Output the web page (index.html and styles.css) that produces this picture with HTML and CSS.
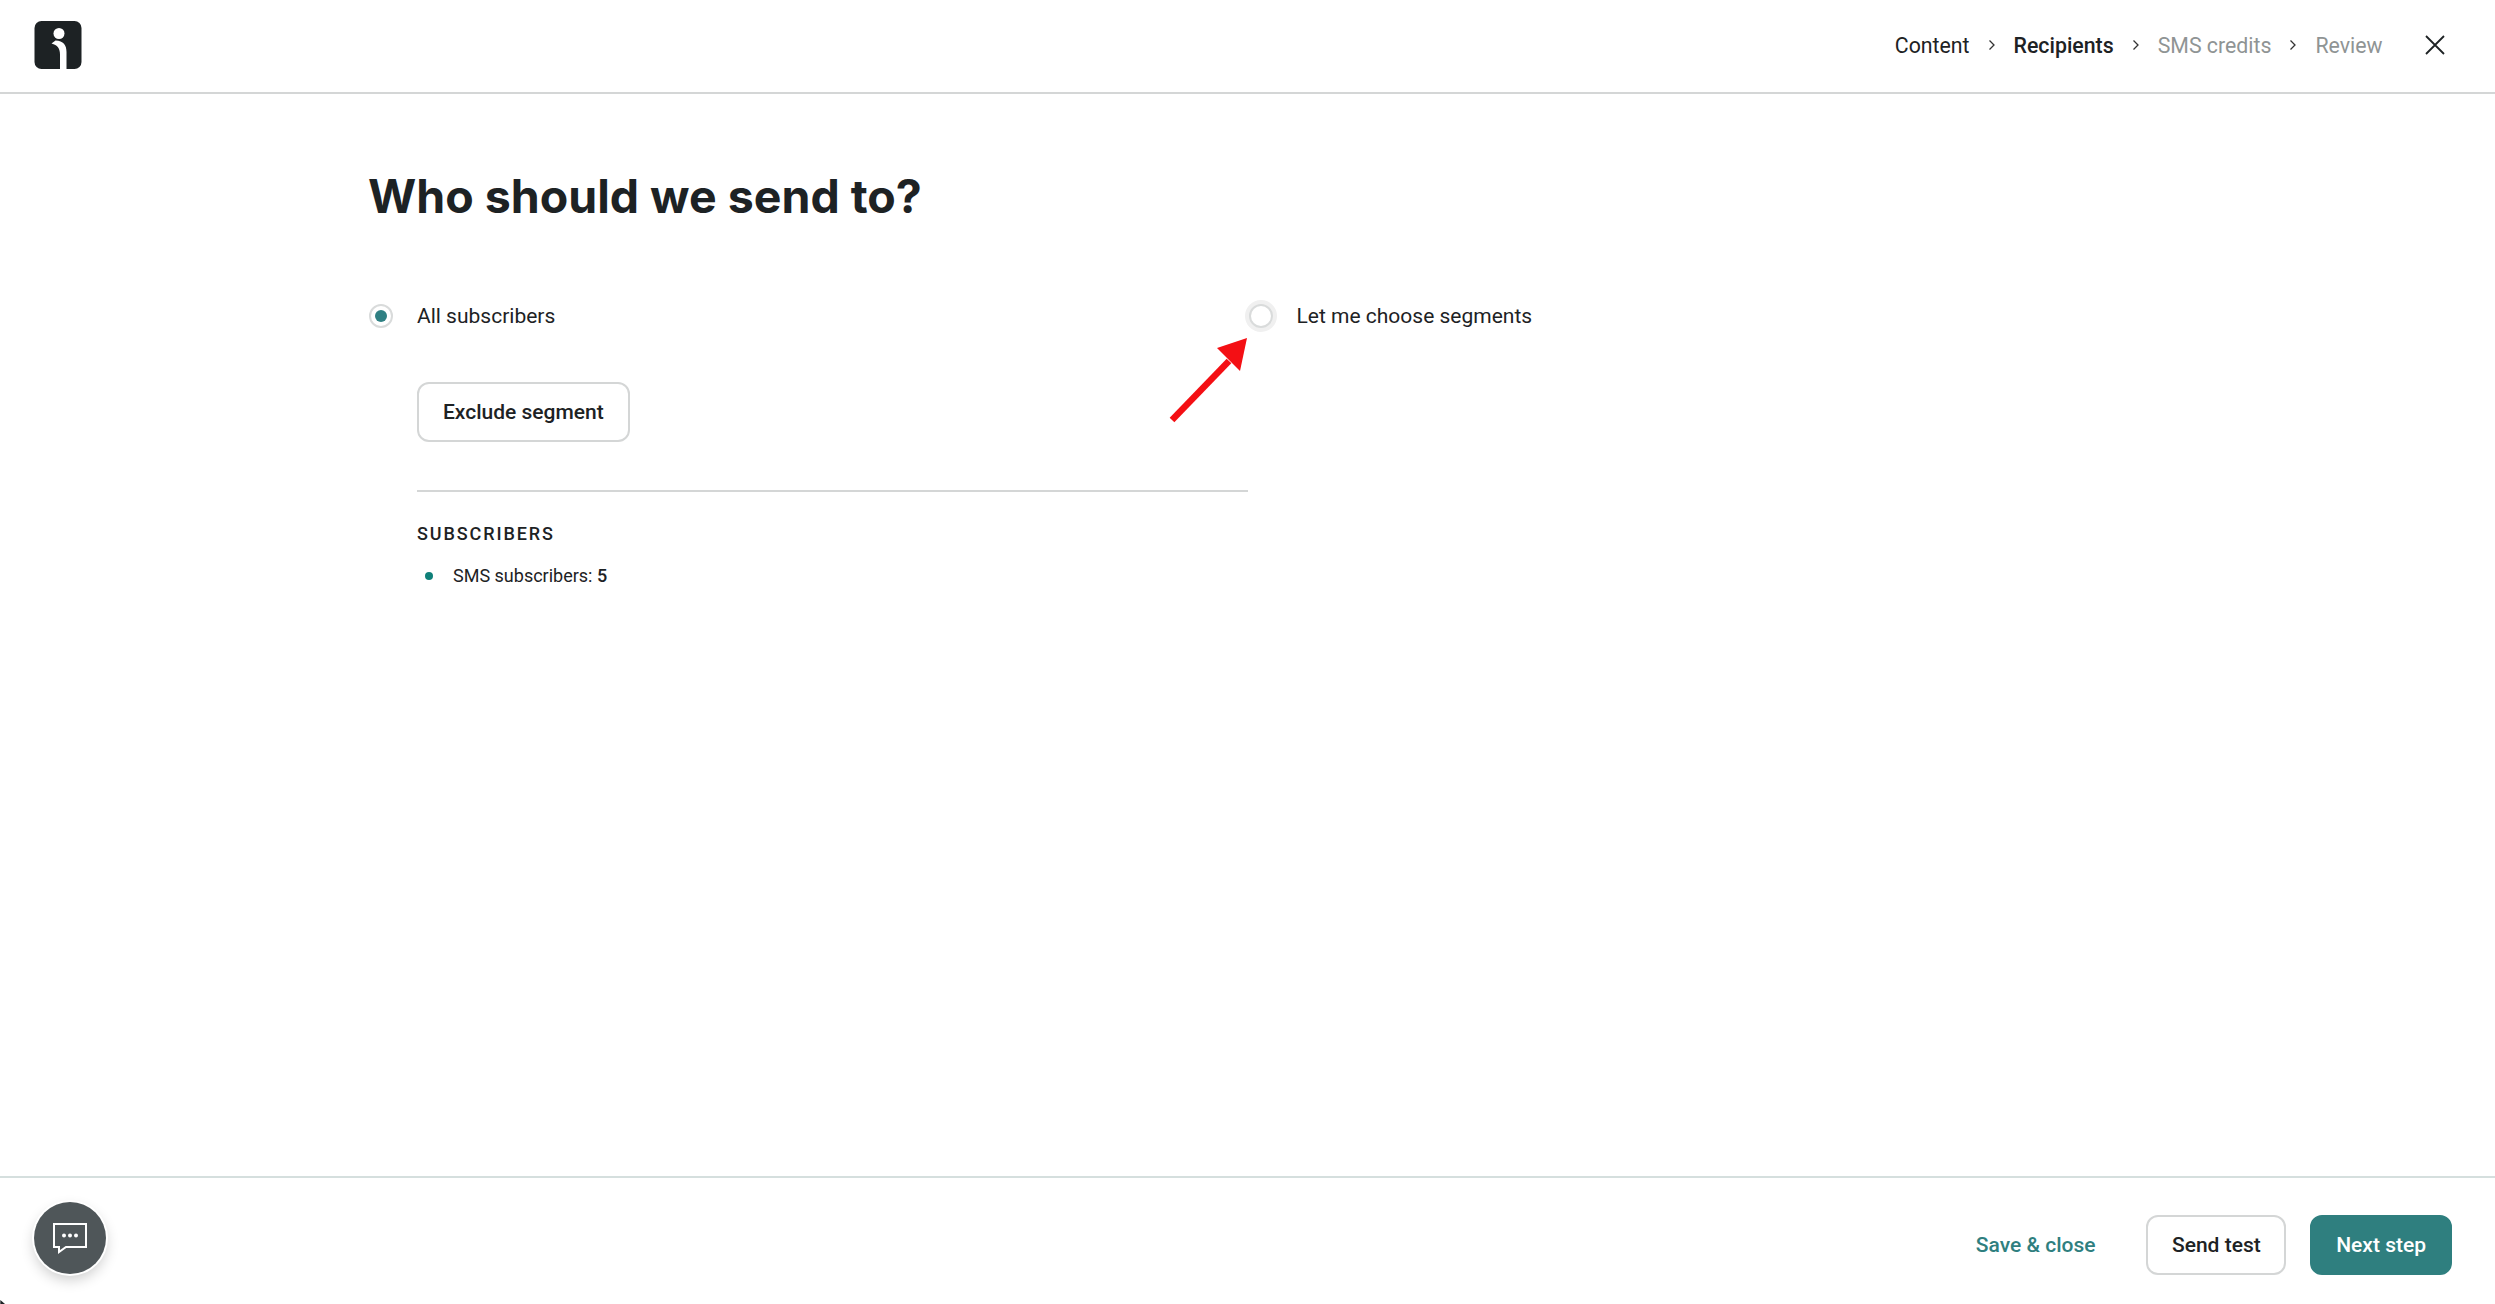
FILE: index.html
```html
<!DOCTYPE html>
<html>
  <head>
    <meta charset="UTF-8">
    <title>Who should we send to?</title>
    <link rel="stylesheet" href="styles.css">
  </head>
  <body>
    <div class="page">
      <header class="topbar">
        <svg class="logo" viewBox="0 0 47 48" width="48" height="48">
          <rect width="47" height="48" rx="7" fill="#1d2224"/>
          <circle cx="24.5" cy="12.5" r="5.5" fill="#fff"/>
          <path d="M17 22.500c6 1.500 8.500 5 8.500 11V48h6.500V31c0-7-3-11-11-11.500z" fill="#fff"/>
        </svg>
        <nav class="steps">
          <span class="step done">Content</span>
          <svg class="chev" viewBox="0 0 8 12" width="8" height="12"><path d="M1.500 1.500 6 6l-4.500 4.500" fill="none" stroke="#333" stroke-width="1.300"/></svg>
          <span class="step current">Recipients</span>
          <svg class="chev" viewBox="0 0 8 12" width="8" height="12"><path d="M1.500 1.500 6 6l-4.500 4.500" fill="none" stroke="#333" stroke-width="1.300"/></svg>
          <span class="step">SMS credits</span>
          <svg class="chev" viewBox="0 0 8 12" width="8" height="12"><path d="M1.500 1.500 6 6l-4.500 4.500" fill="none" stroke="#333" stroke-width="1.300"/></svg>
          <span class="step">Review</span>
          <svg class="close" viewBox="0 0 20 20" width="20" height="20"><path d="M1 1l18 18M19 1 1 19" fill="none" stroke="#1d2224" stroke-width="1.800"/></svg>
        </nav>
      </header>

      <main class="content">
        <h1>Who should we send to?</h1>
        <div class="choices">
          <div class="choice">
            <label class="option"><span class="radio on"></span>All subscribers</label>
            <div class="details">
              <button class="btn">Exclude segment</button>
              <hr class="rule">
              <h2>SUBSCRIBERS</h2>
              <p class="count"><span class="dot"></span>SMS subscribers: <b>5</b></p>
            </div>
          </div>
          <div class="choice">
            <label class="option"><span class="radio off"></span>Let me choose segments</label>
          </div>
        </div>
      </main>

      <footer class="bottombar">
        <a class="link">Save &amp; close</a>
        <button class="btn narrow">Send test</button>
        <button class="btn primary">Next step</button>
      </footer>

      <svg class="arrow" viewBox="0 0 90 90" width="90" height="90">
        <path d="M5 85 62 26" stroke="#f40f14" stroke-width="6.500" fill="none"/>
        <path d="M80 3 50 13 73 36z" fill="#f40f14"/>
      </svg>

      <div class="chat">
        <svg viewBox="0 0 36 32" width="36" height="32">
          <path d="M2 2h32v23H14l-7 5v-5H2z" fill="none" stroke="#fff" stroke-width="2"/>
          <circle cx="12" cy="13.500" r="2" fill="#fff"/>
          <circle cx="18" cy="13.500" r="2" fill="#fff"/>
          <circle cx="24" cy="13.500" r="2" fill="#fff"/>
        </svg>
      </div>

      <svg class="pointer" viewBox="0 0 8 6" width="6" height="4"><path d="M0 0l7 6H0z" fill="#1d2224"/></svg>
    </div>
  </body>
</html>
```

FILE: styles.css
```css
html, body { margin: 0; padding: 0; background: #fff; }
body { font-family: Roboto, "Liberation Sans", sans-serif; color: #1d2224; font-size: 21px; }

.page { position: relative; display: flex; flex-direction: column; height: 1304px; overflow: hidden; }

.topbar { display: flex; align-items: center; justify-content: space-between; height: 91px; padding: 0 50px 1px 34px; border-bottom: 2px solid #d4d6d6; box-sizing: content-box; }
.logo { display: block; margin-top: -1px; }
.steps { display: flex; align-items: center; margin-top: -1px; font-size: 21.300px; }
.step { color: #8f9494; }
.step.done { color: #1d2224; }
.step.current { color: #1d2224; font-weight: 500; }
.chev { margin: 0 18px; }
.close { margin-left: 42.500px; }

.content { flex: 1; padding: 0 0 0 368px; }
h1 { margin: 0; padding-top: 74px; font-family: Inter, sans-serif; font-size: 46.500px; line-height: 56px; font-weight: 700; color: #1d2224; }

.choices { display: flex; margin-top: 78px; }
.choice { width: 879px; }
.option { display: flex; align-items: center; height: 28px; }
.choice:first-child .option { margin-left: 1px; }

.radio { box-sizing: border-box; width: 24px; height: 24px; margin-right: 24px; border-radius: 50%; background: #fff; border: 2px solid #d9dbdb; flex: none; }
.radio.on { position: relative; }
.radio.on::after { content: ""; position: absolute; left: 4px; top: 4px; width: 12px; height: 12px; border-radius: 50%; background: #2f8083; }
.radio.off { margin-left: 1.500px; box-shadow: 0 0 0 4px #f0f0f0; }

.details { margin: 52px 0 0 49px; }

.btn { box-sizing: border-box; height: 60px; padding: 0 24px; border: 2px solid #d4d6d6; border-radius: 12px; background: #fff; color: #1d2224; font-family: Roboto, sans-serif; font-size: 21px; font-weight: 500; }
.btn.narrow { padding: 0 23.500px; }
.btn.primary { background: #2f7f7f; border-color: #2f7f7f; color: #fff; }

.rule { height: 2px; margin: 48px -1px 0 0; border: 0; background: #d4d6d6; }
h2 { margin: 32px 0 0; font-size: 18px; line-height: 20px; font-weight: 500; letter-spacing: 1.900px; }
.count { display: flex; align-items: center; margin: 21px 0 0; font-size: 18px; line-height: 22px; white-space: pre; }
.count b { font-weight: 500; }
.dot { width: 8px; height: 8px; margin: 0 20px 0 8px; border-radius: 50%; background: #0f8079; }

.bottombar { box-sizing: border-box; display: flex; align-items: center; justify-content: flex-end; gap: 24px; height: 128px; padding: 7px 43px 0 0; border-top: 2px solid #d5dfde; }
.link { margin-right: 27px; color: #2f7f7f; font-weight: 500; }

.arrow { position: absolute; left: 1167px; top: 335px; }
.chat { position: absolute; left: 34px; top: 1202px; display: flex; align-items: center; justify-content: center; width: 72px; height: 72px; border-radius: 50%; background: #4f5659; box-shadow: 0 0 0 2px #fff, 0 6px 14px rgba(0, 0, 0, .2); }
.pointer { position: absolute; left: 0; bottom: 0; }
```
